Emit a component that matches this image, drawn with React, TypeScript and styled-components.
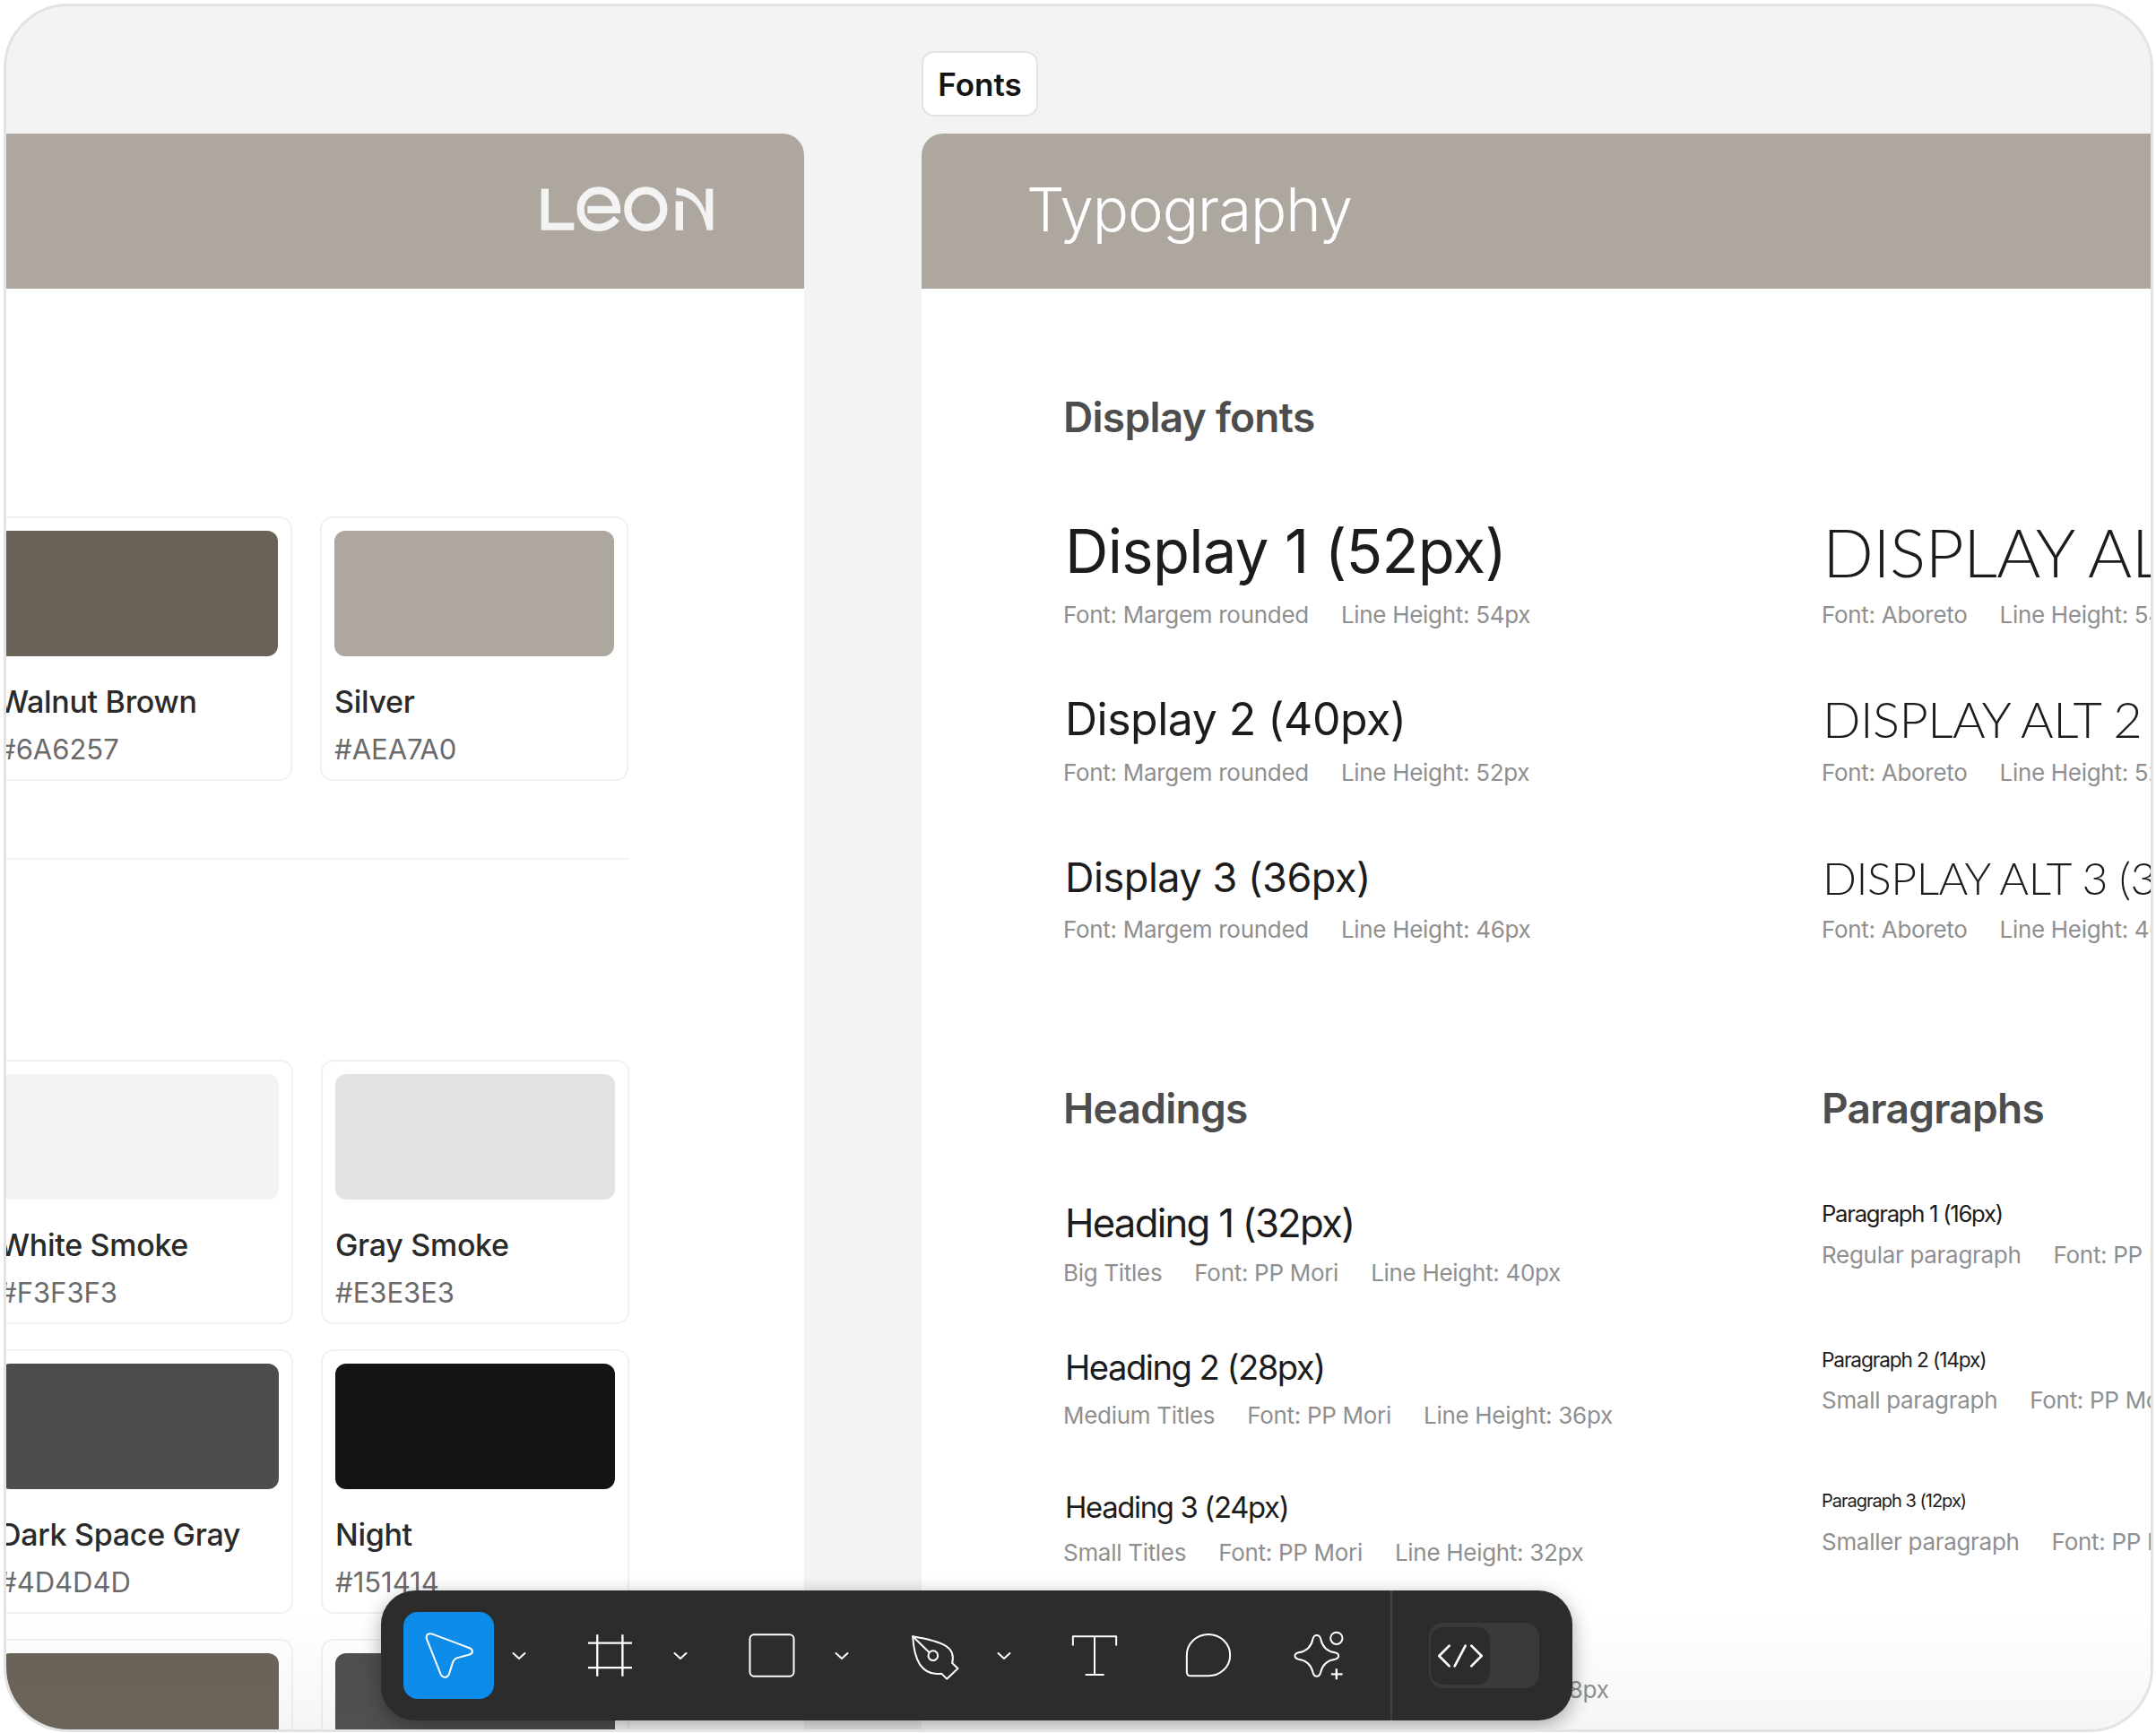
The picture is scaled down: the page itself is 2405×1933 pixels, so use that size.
import React from "react";
import styled, { createGlobalStyle } from "styled-components";

const Global = createGlobalStyle`
  html, body { margin: 0; padding: 0; background: #fff; }
  * { box-sizing: border-box; }
  body { font-family: Inter, "Liberation Sans", sans-serif; }
`;

const Frame = styled.div`
  position: relative;
  margin: 4px 3px 0 4px;
  width: 2398px;
  height: 1928px;
  border: 3px solid #e3e3e3;
  border-radius: 72px;
  background: #f3f3f3;
  overflow: hidden;
  display: grid;
  grid-template-columns: 890px 1fr;
  column-gap: 131px;
  &::after {
    content: "";
    position: absolute;
    left: 0;
    right: 0;
    bottom: 0;
    height: 130px;
    background: linear-gradient(to bottom, rgba(120,120,120,0), rgba(120,120,120,0.07));
    pointer-events: none;
  }
`;

const Column = styled.div`
  display: flex;
  flex-direction: column;
  min-width: 0;
`;

const TagRow = styled.div`
  height: 142px;
  padding-top: 50px;
  flex: none;
`;

const Tag = styled.div`
  width: 130px;
  height: 73px;
  border: 2px solid #e3e3e3;
  border-radius: 14px;
  background: #fff;
  display: flex;
  align-items: center;
  justify-content: center;
  font-size: 35px;
  font-weight: 600;
  color: #151414;
`;

const Panel = styled.div`
  flex: 1;
  background: #fff;
  border-radius: 24px 0 0 0;
  overflow: hidden;
  min-height: 0;
`;

const LeftPanel = styled(Panel)`
  border-radius: 0 24px 0 0;
`;

const Banner = styled.div<{ $end?: boolean }>`
  height: 173px;
  background: #aea7a0;
  display: flex;
  align-items: center;
  justify-content: ${(p) => (p.$end ? "flex-end" : "flex-start")};
  padding: ${(p) => (p.$end ? "0 100px 5px 0" : "0 0 4px 117px")};
`;

const BannerTitle = styled.div`
  font-size: 67px;
  font-weight: 300;
  color: #fff;
  letter-spacing: -1px;
  line-height: 1;
  white-space: nowrap;
`;

const ColorsBody = styled.div`
  margin-left: -25px;
  padding-top: 254px;
  width: 760px;
`;

const SwatchGrid = styled.div<{ $shift?: number }>`
  display: grid;
  grid-template-columns: 344px 344px;
  column-gap: 31px;
  row-gap: 28px;
  margin-left: ${(p) => p.$shift || 0}px;
`;

const Rule = styled.div`
  height: 2px;
  width: 720px;
  background: #f3f3f3;
  margin: 86px 0 223px;
`;

const Card = styled.div`
  border: 2px solid #f1f1f1;
  border-radius: 14px;
  padding: 14px 14px 15px;
  background: #fff;
`;

const Swatch = styled.div<{ $color: string }>`
  height: 140px;
  border-radius: 12px;
  background: ${(p) => p.$color};
`;

const SwatchName = styled.div`
  margin-top: 31px;
  font-size: 34px;
  line-height: 40px;
  font-weight: 500;
  color: #2a2a2a;
  letter-spacing: -0.3px;
  white-space: nowrap;
`;

const SwatchHex = styled.div`
  margin-top: 15px;
  font-size: 31px;
  line-height: 36px;
  font-weight: 400;
  color: #6a6a6a;
  white-space: nowrap;
`;

const TypeBody = styled.div`
  padding: 113px 0 0 158px;
  display: grid;
  grid-template-columns: 846px 1fr;
`;

const Stack = styled.div<{ $top?: number }>`
  display: flex;
  flex-direction: column;
  min-width: 0;
  margin-top: ${(p) => p.$top || 0}px;
`;

const SectionTitle = styled.div`
  font-size: 46px;
  line-height: 60px;
  font-weight: 600;
  color: #4d4d4d;
  letter-spacing: -0.7px;
  white-space: nowrap;
`;

const Specimen = styled.div<{ $top: number }>`
  margin-top: ${(p) => p.$top}px;
`;

const SpecimenTitle = styled.div<{ $size: number; $lh: number; $track?: number; $alt?: boolean; $x?: number }>`
  font-family: ${(p) => (p.$alt ? 'Lato, "Liberation Sans", sans-serif' : 'Inter, "Liberation Sans", sans-serif')};
  font-size: ${(p) => p.$size}px;
  line-height: ${(p) => p.$lh}px;
  font-weight: ${(p) => (p.$alt ? 300 : 400)};
  letter-spacing: ${(p) => p.$track || 0}em;
  color: #1c1c1c;
  margin-left: ${(p) => p.$x || 0}px;
  white-space: nowrap;
`;

const Meta = styled.div`
  display: flex;
  gap: 36px;
  margin-top: 4px;
  font-size: 26px;
  line-height: 36px;
  color: #8f8f8f;
  letter-spacing: -0.3px;
  white-space: nowrap;
`;

const Toolbar = styled.div`
  position: absolute;
  left: 418px;
  top: 1767px;
  width: 1329px;
  height: 145px;
  border-radius: 38px;
  background: #2c2c2c;
  box-shadow: 0 6px 22px rgba(0, 0, 0, 0.32);
  display: flex;
  align-items: center;
  padding-left: 25px;
  z-index: 2;
`;

const Tool = styled.div<{ $gap: number }>`
  flex: none;
  margin-left: ${(p) => p.$gap}px;
  display: flex;
  align-items: center;
  justify-content: center;
  svg { display: block; overflow: visible; }
`;

const ActiveTool = styled(Tool)`
  width: 101px;
  height: 97px;
  border-radius: 16px;
  background: #0d8ce9;
`;

const ToolDivider = styled.div<{ $gap: number }>`
  flex: none;
  width: 2px;
  align-self: stretch;
  background: #424242;
  margin-left: ${(p) => p.$gap}px;
`;

const CodeToggle = styled.div<{ $gap: number }>`
  flex: none;
  width: 123px;
  height: 73px;
  margin-left: ${(p) => p.$gap}px;
  border-radius: 16px;
  background: #3a3a3a;
  display: flex;
  align-items: center;
`;

const CodeThumb = styled.div`
  width: 70px;
  height: 68px;
  border-radius: 16px;
  background: #2c2c2c;
  border: 2px solid #3a3a3a;
  display: flex;
  align-items: center;
  justify-content: center;
`;

const stroke = { fill: "none", stroke: "#fff", strokeLinecap: "round" as const, strokeLinejoin: "round" as const };

const Pointer = () => (
  <svg width="63" height="57" viewBox="90 90 190 170" {...stroke} strokeWidth={6}>
    <path d="M112 122 C106 106 116 99 130 103 L255 150 C268 155 268 168 255 172 L215 183 C205 186 202 190 199 198 L186 238 C181 252 164 252 158 238 Z" />
  </svg>
);

const Chevron = () => (
  <svg width="16" height="10" viewBox="0 0 16 10" {...stroke} strokeWidth={2}>
    <path d="M1.5 2 L8 8 L14.5 2" />
  </svg>
);

const FrameIcon = () => (
  <svg width="49" height="47" viewBox="647 100 148 140" {...stroke} strokeLinecap="butt" strokeWidth={7}>
    <path d="M678 100V240M763 100V240M647 128H795M647 211H795" />
  </svg>
);

const RectIcon = () => (
  <svg width="52" height="49" viewBox="1184 95 156 148" {...stroke} strokeWidth={6}>
    <rect x="1188" y="99" width="148" height="140" rx="14" />
  </svg>
);

const PenIcon = () => (
  <svg width="55" height="55" viewBox="48 57 164 165" {...stroke} strokeWidth={6}>
    <path d="M54 76 C90 82 135 90 165 108 C185 120 192 140 186 165 L205 183 L168 218 L150 200 C120 205 95 195 78 170 C62 145 56 110 54 76 Z" />
    <path d="M54 76 L108 128" />
    <circle cx="122" cy="140" r="16" />
  </svg>
);

const TextIcon = () => (
  <svg width="52" height="47" viewBox="585 72 156 142" {...stroke} strokeLinecap="butt" strokeWidth={6}>
    <path d="M590 110V79H736V110M663 79V208M632 208H695" />
  </svg>
);

const CommentIcon = () => (
  <svg width="52" height="49" viewBox="965 65 156 148" {...stroke} strokeWidth={6}>
    <path d="M970 138 A73 70 0 1 1 1043 208 L984 208 Q970 208 970 194 Z" />
  </svg>
);

const SparkIcon = () => (
  <svg width="57" height="55" viewBox="1330 55 170 165" {...stroke} strokeWidth={6}>
    <path d="M1394 82 C1398 66 1416 66 1420 82 C1426 112 1442 124 1468 128 C1484 132 1484 146 1468 150 C1442 154 1426 166 1420 194 C1416 212 1398 212 1394 194 C1388 166 1372 154 1346 150 C1330 146 1330 132 1346 128 C1372 124 1388 112 1394 82 Z" />
    <circle cx="1473" cy="80" r="20" />
    <path d="M1473 182V218M1455 200H1493" strokeLinecap="butt" strokeWidth={7} />
  </svg>
);

const CodeIcon = () => (
  <svg width="50" height="26" viewBox="222 130 150 76" {...stroke} strokeWidth={8}>
    <path d="M260 134 L226 168 L260 202M314 134 L278 202M334 134 L368 168 L334 202" />
  </svg>
);

const Logo = () => (
  <svg width="195" height="52" viewBox="40 38 585 155" role="img" aria-label="Leon">
    <path fill="#f3f3f3" d="M45 48H70V162H155V187H45Z" />
    <path
      fill="none"
      stroke="#f3f3f3"
      strokeWidth="25"
      d="M200 118H298C298 82 272 54 237 54C202 54 177 82 177 116C177 152 202 178 237 178C260 178 280 168 298 148"
    />
    <ellipse cx="395" cy="116" rx="60" ry="62" fill="none" stroke="#f3f3f3" strokeWidth="25" />
    <path fill="#f3f3f3" d="M495 90H520V187H495Z" />
    <path fill="#f3f3f3" d="M497 45C545 45 580 80 596 130V48H620V187H600C585 120 560 72 497 70Z" />
  </svg>
);

const upper = [
  { name: "Walnut Brown", hex: "#6A6257", color: "#6a6257" },
  { name: "Silver", hex: "#AEA7A0", color: "#aea7a0" },
];

const lower = [
  { name: "White Smoke", hex: "#F3F3F3", color: "#f3f3f3" },
  { name: "Gray Smoke", hex: "#E3E3E3", color: "#e3e3e3" },
  { name: "Dark Space Gray", hex: "#4D4D4D", color: "#4d4d4d" },
  { name: "Night", hex: "#151414", color: "#151414" },
  { name: "Walnut Brown", hex: "#6A6257", color: "#6a6257" },
  { name: "Dark Space Gray", hex: "#4D4D4D", color: "#4d4d4d" },
];

type Spec = { title: string; size: number; lh: number; track: number; top: number; meta: string[]; alt?: boolean; x?: number };

const display: Spec[] = [
  { title: "Display 1 (52px)", size: 67, lh: 98, track: -0.01, top: 71, meta: ["Font: Margem rounded", "Line Height: 54px"], x: 2 },
  { title: "Display 2 (40px)", size: 50, lh: 76, track: -0.01, top: 60, meta: ["Font: Margem rounded", "Line Height: 52px"], x: 2 },
  { title: "Display 3 (36px)", size: 45, lh: 72, track: -0.01, top: 63, meta: ["Font: Margem rounded", "Line Height: 46px"], x: 2 },
];

const displayAlt: Spec[] = [
  { title: "DISPLAY ALT 1 (52px)", size: 75, lh: 98, track: -0.01, top: 131, meta: ["Font: Aboreto", "Line Height: 54px"], alt: true, x: 1 },
  { title: "DISPLAY ALT 2 (40px)", size: 56, lh: 76, track: -0.01, top: 60, meta: ["Font: Aboreto", "Line Height: 52px"], alt: true, x: 1 },
  { title: "DISPLAY ALT 3 (36px)", size: 50, lh: 72, track: -0.01, top: 63, meta: ["Font: Aboreto", "Line Height: 46px"], alt: true, x: 1 },
];

const headings: Spec[] = [
  { title: "Heading 1 (32px)", size: 43.7, lh: 66, track: -0.04, top: 66, meta: ["Big Titles", "Font: PP Mori", "Line Height: 40px"], x: 2 },
  { title: "Heading 2 (28px)", size: 38.2, lh: 64, track: -0.04, top: 55, meta: ["Medium Titles", "Font: PP Mori", "Line Height: 36px"], x: 2 },
  { title: "Heading 3 (24px)", size: 32.8, lh: 58, track: -0.04, top: 55, meta: ["Small Titles", "Font: PP Mori", "Line Height: 32px"], x: 2 },
  { title: "Heading 4 (20px)", size: 28, lh: 58, track: -0.04, top: 55, meta: ["Caption Titles", "Font: PP Mori", "Line Height: 28px"], x: 2 },
];

const paragraphs: Spec[] = [
  { title: "Paragraph 1 (16px)", size: 25.7, lh: 48, track: -0.05, top: 64, meta: ["Regular paragraph", "Font: PP Mori"] },
  { title: "Paragraph 2 (14px)", size: 22.7, lh: 46, track: -0.05, top: 76, meta: ["Small paragraph", "Font: PP Mori"] },
  { title: "Paragraph 3 (12px)", size: 20, lh: 48, track: -0.05, top: 70, meta: ["Smaller paragraph", "Font: PP Mori"] },
];

const SpecimenBlock = ({ s }: { s: Spec }) => (
  <Specimen $top={s.top}>
    <SpecimenTitle $size={s.size} $lh={s.lh} $track={s.track} $alt={s.alt} $x={s.x}>
      {s.title}
    </SpecimenTitle>
    <Meta>
      {s.meta.map((m) => (
        <span key={m}>{m}</span>
      ))}
    </Meta>
  </Specimen>
);

const SwatchCard = ({ name, hex, color }: { name: string; hex: string; color: string }) => (
  <Card>
    <Swatch $color={color} />
    <SwatchName>{name}</SwatchName>
    <SwatchHex>{hex}</SwatchHex>
  </Card>
);

export default function App() {
  return (
    <>
      <Global />
      <Frame>
        <Column>
          <TagRow />
          <LeftPanel>
            <Banner $end>
              <Logo />
            </Banner>
            <ColorsBody>
              <SwatchGrid>
                {upper.map((c) => (
                  <SwatchCard key={c.hex} {...c} />
                ))}
              </SwatchGrid>
              <Rule />
              <SwatchGrid $shift={1}>
                {lower.map((c, i) => (
                  <SwatchCard key={i} {...c} />
                ))}
              </SwatchGrid>
            </ColorsBody>
          </LeftPanel>
        </Column>
        <Column>
          <TagRow>
            <Tag>Fonts</Tag>
          </TagRow>
          <Panel>
            <Banner>
              <BannerTitle>Typography</BannerTitle>
            </Banner>
            <TypeBody>
              <Stack>
                <SectionTitle>Display fonts</SectionTitle>
                {display.map((s) => (
                  <SpecimenBlock key={s.title} s={s} />
                ))}
              </Stack>
              <Stack>
                {displayAlt.map((s) => (
                  <SpecimenBlock key={s.title} s={s} />
                ))}
              </Stack>
              <Stack $top={151}>
                <SectionTitle>Headings</SectionTitle>
                {headings.map((s) => (
                  <SpecimenBlock key={s.title} s={s} />
                ))}
              </Stack>
              <Stack $top={151}>
                <SectionTitle>Paragraphs</SectionTitle>
                {paragraphs.map((s) => (
                  <SpecimenBlock key={s.title} s={s} />
                ))}
              </Stack>
            </TypeBody>
          </Panel>
        </Column>
        <Toolbar>
          <ActiveTool $gap={0}><Pointer /></ActiveTool>
          <Tool $gap={20}><Chevron /></Tool>
          <Tool $gap={69}><FrameIcon /></Tool>
          <Tool $gap={46}><Chevron /></Tool>
          <Tool $gap={68}><RectIcon /></Tool>
          <Tool $gap={44}><Chevron /></Tool>
          <Tool $gap={69}><PenIcon /></Tool>
          <Tool $gap={41}><Chevron /></Tool>
          <Tool $gap={67}><TextIcon /></Tool>
          <Tool $gap={75}><CommentIcon /></Tool>
          <Tool $gap={69}><SparkIcon /></Tool>
          <ToolDivider $gap={51} />
          <CodeToggle $gap={41}>
            <CodeThumb><CodeIcon /></CodeThumb>
          </CodeToggle>
        </Toolbar>
      </Frame>
    </>
  );
}
